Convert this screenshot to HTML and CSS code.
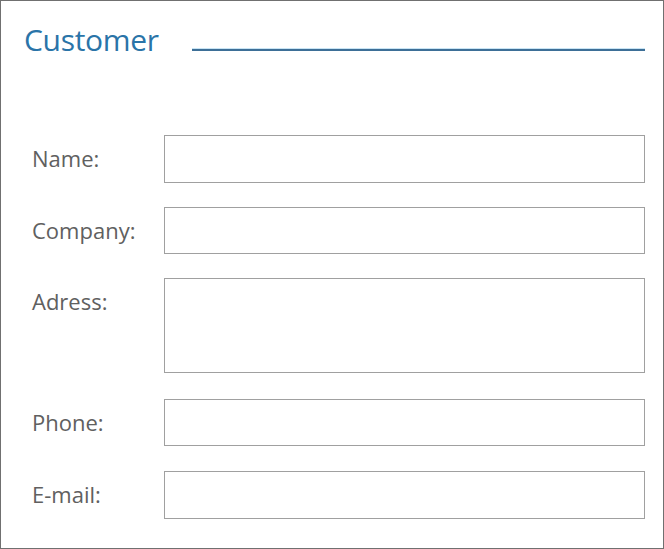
FILE: index.html
```html
<!DOCTYPE html>
<html>
<head>
<meta charset="utf-8">
<link rel="stylesheet" href="styles.css">
</head>
<body>
<div class="panel">
  <div class="header">
    <h1 class="title">Customer</h1>
    <div class="rule"></div>
  </div>
  <div class="form">
    <div class="row r-name"><label class="label">Name:</label><div class="field h48"></div></div>
    <div class="row r-company"><label class="label">Company:</label><div class="field h47"></div></div>
    <div class="row r-address"><label class="label">Adress:</label><div class="field h95"></div></div>
    <div class="row r-phone"><label class="label">Phone:</label><div class="field h47"></div></div>
    <div class="row r-email"><label class="label">E-mail:</label><div class="field h48"></div></div>
  </div>
</div>
</body>
</html>
```
FILE: styles.css
```css
html, body { margin: 0; padding: 0; background: #fff; }
.panel {
  width: 664px;
  height: 549px;
  box-sizing: border-box;
  border: 1px solid #707070;
  font-family: "Open Sans", "Noto Sans", sans-serif;
}
.header {
  display: flex;
  align-items: flex-start;
  padding: 19px 18px 0 23px;
}
.title {
  margin: 0;
  font-weight: 400;
  font-size: 30px;
  line-height: 40px;
  color: #2a74a8;
  letter-spacing: -0.3px;
}
.rule {
  flex: 1;
  margin-left: 33px;
  margin-top: 29px;
  height: 2px;
  background: #3d6f97;
  box-shadow: 0 -1px 0 #c8e4f4;
}
.form {
  display: flex;
  flex-direction: column;
  padding: 75px 18px 0 31px;
}
.row {
  display: grid;
  grid-template-columns: 132px 1fr;
  align-items: start;
}
.r-company, .r-address { margin-top: 24px; }
.r-phone { margin-top: 26px; }
.r-email { margin-top: 25px; }
.label {
  font-size: 22px;
  line-height: 26px;
  color: #606060;
  padding-top: 10px;
}
.field {
  box-sizing: border-box;
  border: 1px solid #a0a0a0;
  background: #fff;
}
.h48 { height: 48px; }
.h47 { height: 47px; }
.h95 { height: 95px; }
```
